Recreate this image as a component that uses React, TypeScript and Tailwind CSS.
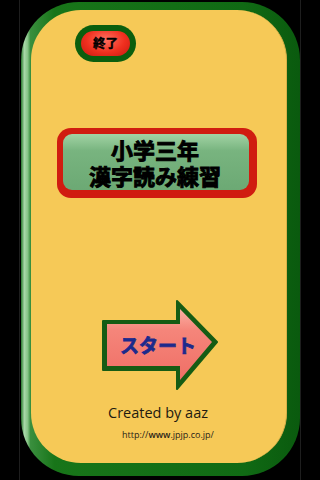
const jp = { fontFamily: '"Noto Sans CJK JP", sans-serif' };
const en = { fontFamily: '"Open Sans", sans-serif' };

export default function App() {
	return (
		<div className="w-[320px] h-[480px] bg-black overflow-hidden">
			<div className="ml-[19px] w-[282px] h-[480px] border-x border-[#1e1e1e] pt-[2px]">
				{/* green frame */}
				<div className="ml-[1px] w-[279px] h-[474px] rounded-[58px] bg-[linear-gradient(90deg,#2a7a2e_0%,#a9d8a9_1.2%,#86c486_2.4%,#3a8f3e_3.4%,#187519_12%,#106a14_80%,#0a5a0e_100%)] pt-[8px] pl-[10px] pr-[13px] pb-[13px]">
					<div className="w-full h-full rounded-[50px] bg-[#f6c957] border-r border-[#d9b04a] flex flex-col">
						{/* exit button */}
						<div className="ml-[44px] mt-[15px] w-[61px] h-[37px] rounded-full bg-[#0b5e0e] p-[6px]">
							<div className="w-full h-full rounded-full bg-[radial-gradient(ellipse_at_50%_35%,#ff7060_0%,#f0301f_55%,#c81810_100%)] flex items-center justify-center">
								<span className="text-[12.5px] font-bold text-black leading-none [-webkit-text-stroke:0.4px_black]" style={jp}>
									終了
								</span>
							</div>
						</div>

						{/* title button */}
						<div className="ml-[26px] mt-[66px] w-[200px] h-[70px] rounded-[14px] bg-[#d01c10] pt-[6px] pl-[6px] pr-[8px] pb-[8px]">
							<div className="w-full h-full rounded-[9px] bg-[linear-gradient(180deg,#a2d3a4_0%,#78b47f_30%,#6ca974_100%)] flex flex-col items-center justify-center pr-[2px]">
								<span className="block text-[22px] font-bold text-black leading-[26px] [-webkit-text-stroke:0.9px_black]" style={jp}>
									小学三年
								</span>
								<span className="block text-[22px] font-bold text-black leading-[26px] [-webkit-text-stroke:0.9px_black]" style={jp}>
									漢字読み練習
								</span>
							</div>
						</div>

						{/* start arrow */}
						<div className="relative ml-[71px] mt-[102px] w-[116px] h-[90px]">
							<svg width="116" height="90" viewBox="0 0 116 90">
								<defs>
									<linearGradient id="ar" x1="0" y1="0" x2="0" y2="1">
										<stop offset="0" stopColor="#fbb0a4" />
										<stop offset="0.3" stopColor="#f5857a" />
										<stop offset="1" stopColor="#ef6f66" />
									</linearGradient>
								</defs>
								<path d="M1 21 L75 21 L75 1 L115 42 L75 89 L75 70 L1 70 Z" fill="#165c14" stroke="#165c14" strokeWidth="2" strokeLinejoin="round" />
								<path d="M5 24 L78 24 L78 9 L110 42 L78 80 L78 66 L5 66 Z" fill="url(#ar)" />
							</svg>
							<div className="absolute left-[18px] top-[33px] w-[76px] h-[22px] flex items-center justify-center">
								<span className="text-[19px] font-bold text-[#1c2a8c] leading-none [-webkit-text-stroke:0.8px_#1c2a8c]" style={jp}>
									スタート
								</span>
							</div>
						</div>

						{/* credits */}
						<div className="mt-[16px] ml-[77px] text-[14.5px] text-[#1e1a10] leading-none" style={en}>
							Created by aaz
						</div>
						<div className="mt-[9px] ml-[91px] text-[9px] text-[#2a2418] leading-none" style={en}>
							http://<span className="font-semibold">www</span>.jpjp.co.jp/
						</div>
					</div>
				</div>
			</div>
		</div>
	);
}
